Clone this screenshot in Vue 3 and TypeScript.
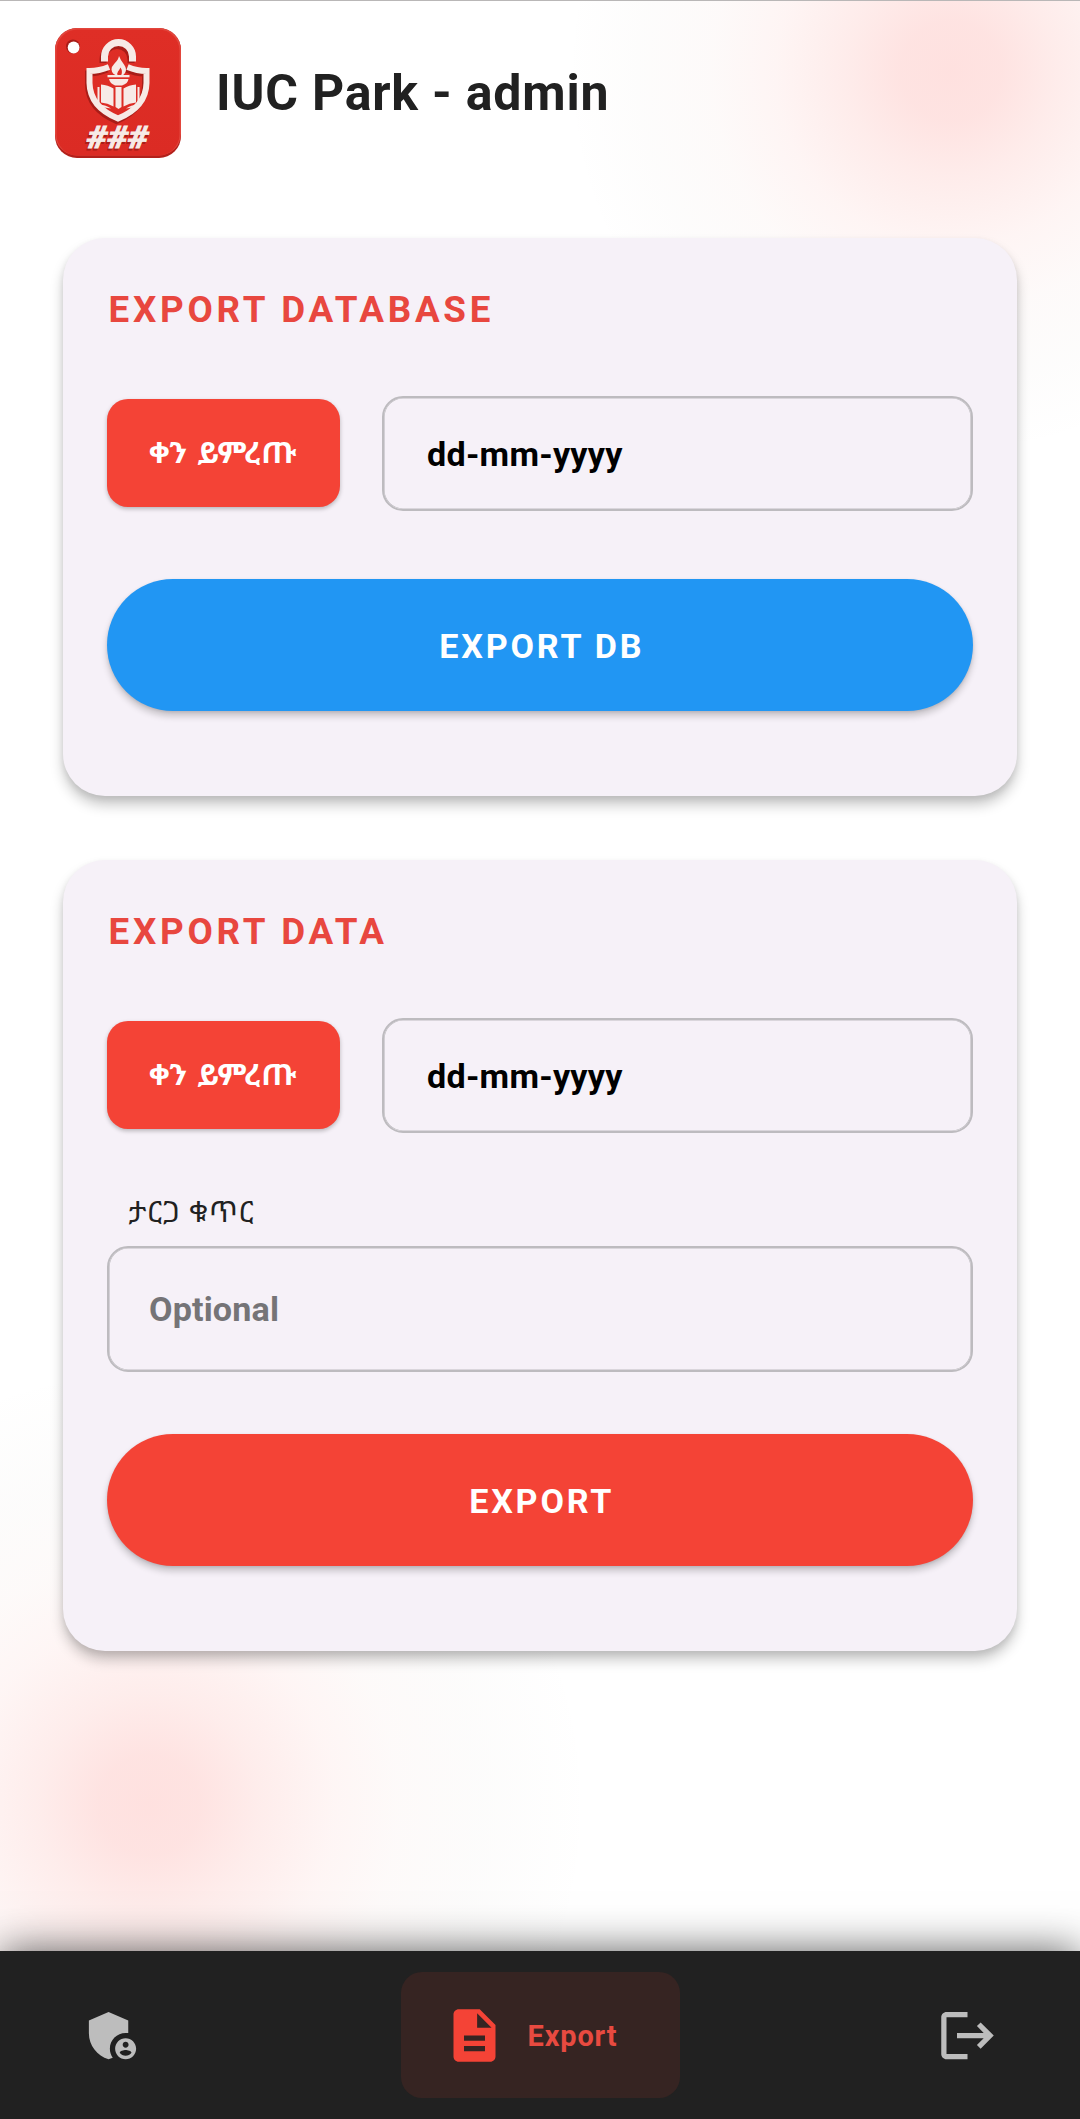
<script setup lang="ts">
import { ref } from 'vue'

interface NavItem {
  id: string
  label: string
  paths: string[]
}

const dateHint = 'dd-mm-yyyy'
const active = ref('export')

const navItems: NavItem[] = [
  {
    id: 'admin',
    label: '',
    paths: [
      'M17 11c.34 0 .67.04 1 .09V6.27L10.5 3 3 6.27v4.91c0 4.54 3.2 8.79 7.5 9.82.55-.13 1.08-.32 1.6-.55-.69-.98-1.1-2.17-1.1-3.45 0-3.31 2.69-6 6-6z',
      'M17 13c-2.21 0-4 1.79-4 4s1.79 4 4 4 4-1.79 4-4-1.79-4-4-4zm0 1.38c.62 0 1.12.51 1.12 1.12s-.51 1.12-1.12 1.12-1.12-.51-1.12-1.12.5-1.12 1.12-1.12zm0 5.37c-.93 0-1.74-.46-2.24-1.17.05-.72 1.51-1.08 2.24-1.08s2.19.36 2.24 1.08c-.5.71-1.31 1.17-2.24 1.17z',
    ],
  },
  {
    id: 'export',
    label: 'Export',
    paths: ['M14 2H6c-1.1 0-2 .9-2 2v16c0 1.1.89 2 2 2h12c1.1 0 2-.9 2-2V8l-6-6zm2 16H8v-2h8v2zm0-4H8v-2h8v2zm-3-5V3.5L18.5 9H13z'],
  },
  {
    id: 'logout',
    label: '',
    paths: ['M17 7l-1.41 1.41L18.17 11H8v2h10.17l-2.58 2.58L17 17l5-5zM4 5h8V3H4c-1.1 0-2 .9-2 2v14c0 1.1.9 2 2 2h8v-2H4V5z'],
  },
]
</script>

<template>
  <div class="screen">
    <header class="top">
      <svg class="logo" viewBox="0 0 128 132" width="128" height="132">
        <defs>
          <linearGradient id="tile" x1="0" y1="0" x2="0" y2="1">
            <stop offset="0" stop-color="#df2e26" />
            <stop offset="1" stop-color="#db2b24" />
          </linearGradient>
        </defs>
        <rect x="1" y="1" width="126" height="130" rx="22" fill="#b3201b" />
        <rect x="1" y="1" width="126" height="127.500" rx="22" fill="#e2463d" />
        <rect x="2.500" y="2.500" width="123" height="126" rx="21" fill="url(#tile)" />
        <circle cx="19" cy="19.500" r="7" fill="#a91c17" />
        <circle cx="19.600" cy="20.500" r="5.900" fill="#fff" />
        <g id="mark">
          <g transform="translate(-1.500 2)" fill="none" stroke="#a81d18">
            <path d="M50.500 34v-3.500a14 14 0 0 1 28 0V34" stroke-width="7" />
            <path d="M55 40.500Q45 44.500 35.500 44.500V56Q36 80 64 92Q92 80 92.500 56V44.500Q83 44.500 73.500 40.500" stroke-width="6" />
          </g>
          <g fill="none" stroke="#f7eae6">
            <path d="M50.500 34.500v-5a14 14 0 0 1 28 0v5" stroke-width="7" />
            <path d="M55 40Q45 44 35.500 44V56Q36 80 64 91.500Q92 80 92.500 56V44Q83 44 73.500 40" stroke-width="6" />
          </g>
          <g fill="#f7eae6">
            <path d="M65 29q1.500 4 5 8.500q3.500 5 1 8.500q-1.500 2.500-4 2.500q2-4-.5-8q-1.500 3-2.500 4q-1.500 2 0 4q-6-.5-6.500-6q0-3 3-6q4-4 4.500-7.500z" />
            <rect x="53.500" y="48" width="22" height="2.300" />
            <path d="M55 52h19.500q-.5 4.500-6.500 6.500h-7q-5-2-6-6.500z" />
            <path d="M61.500 60h6v20l-3 2-3-2z" />
            <path d="M47 57.500q7 .5 12.500 4v18q-6-3.500-12.500-4z" />
            <path d="M82 57.500q-7 .5-12.500 4v18q6-3.500 12.500-4z" />
            <path d="M43.500 60h2v17.500q6.500.5 11.500 4q-6.500-1.500-13.500-1.500z" />
            <path d="M85.500 60h-2v17.500q-6.500.5-11.500 4q6.500-1.500 13.500-1.500z" />
          </g>
        </g>
        <text class="hash" x="31" y="122.500" textLength="62" lengthAdjust="spacingAndGlyphs" fill="#a81d18" stroke="#a81d18">###</text>
        <text class="hash" x="32.500" y="120.500" textLength="62" lengthAdjust="spacingAndGlyphs" fill="#f7eae6" stroke="#f7eae6">###</text>
      </svg>
      <h1>IUC Park - admin</h1>
    </header>

    <main>
      <section class="card">
        <h2>EXPORT DATABASE</h2>
        <div class="row">
          <button class="pick"><span>ቀን ይምረጡ</span></button>
          <div class="field date">{{ dateHint }}</div>
        </div>
        <button class="cta blue">EXPORT DB</button>
      </section>

      <section class="card">
        <h2>EXPORT DATA</h2>
        <div class="row">
          <button class="pick"><span>ቀን ይምረጡ</span></button>
          <div class="field date">{{ dateHint }}</div>
        </div>
        <label>ታርጋ ቁጥር</label>
        <div class="field plate">Optional</div>
        <button class="cta red">EXPORT</button>
      </section>
    </main>

    <nav>
      <button v-for="item in navItems" :key="item.id" class="tab" :class="{ active: active === item.id }" @click="active = item.id">
        <svg viewBox="0 0 24 24" width="63" height="63" fill="currentColor">
          <path v-for="d in item.paths" :key="d" :d="d" fill-rule="evenodd" />
        </svg>
        <span v-if="item.label">{{ item.label }}</span>
      </button>
    </nav>
  </div>
</template>

<style>
body {
  margin: 0;
}
</style>

<style scoped>
* {
  box-sizing: border-box;
}
.screen {
  width: 1080px;
  height: 2119px;
  display: flex;
  flex-direction: column;
  overflow: hidden;
  border-top: 1px solid #b9b7b7;
  font-family: Roboto, 'Noto Sans Ethiopic', 'Noto Sans', sans-serif;
  background:
    radial-gradient(circle 385px at 951px 70px, rgba(250, 62, 52, 0.155) 0, rgba(250, 62, 52, 0.145) 50px, rgba(246, 67, 54, 0.1) 105px, rgba(240, 70, 56, 0.054) 175px, rgba(200, 95, 75, 0.03) 240px, rgba(150, 115, 95, 0.018) 310px, rgba(120, 110, 110, 0) 100%),
    radial-gradient(circle 440px at 149px 1804px, rgba(250, 62, 52, 0.155) 0, rgba(250, 62, 52, 0.145) 50px, rgba(246, 67, 54, 0.098) 110px, rgba(240, 70, 56, 0.05) 185px, rgba(200, 95, 75, 0.032) 250px, rgba(145, 120, 100, 0.022) 330px, rgba(120, 110, 110, 0) 100%),
    #fff;
}
button {
  border: 0;
  padding: 0;
  margin: 0;
  font: inherit;
}
.top {
  display: flex;
  align-items: center;
  gap: 34px;
  height: 131px;
  margin: 26px 54px 0;
}
.logo {
  flex: none;
}
.hash {
  font: italic 700 31px Roboto, sans-serif;
  stroke-width: 0.900px;
}
h1 {
  margin: 0;
  font-size: 50px;
  font-weight: 700;
  letter-spacing: 0.800px;
  color: #212121;
  white-space: nowrap;
}
main {
  flex: 1;
  display: flex;
  flex-direction: column;
  gap: 64px;
  padding: 80px 63px 0;
}
.card {
  display: flex;
  flex-direction: column;
  padding: 49.500px 44px 85.500px 43.500px;
  border-radius: 42px;
  background: #f6f1f8;
  box-shadow: 0 9px 13px rgba(0, 0, 0, 0.22), 0 3px 6px rgba(0, 0, 0, 0.08);
}
h2 {
  height: 43px;
  margin: 0 0 65px 2px;
  font-size: 36.750px;
  line-height: 43px;
  font-weight: 700;
  letter-spacing: 3.750px;
  color: #e8473f;
  white-space: nowrap;
}
.row {
  display: flex;
  align-items: center;
  gap: 42px;
}
.pick {
  width: 233.500px;
  height: 108px;
  padding-bottom: 4px;
  border-radius: 21px;
  background: #f44336;
  color: #fff;
  font-size: 29.500px;
  font-weight: 700;
  letter-spacing: 1.300px;
  white-space: nowrap;
  box-shadow: 0 2px 4px rgba(0, 0, 0, 0.25);
}
.field {
  display: flex;
  align-items: center;
  border: 2px solid #bdbbbf;
  box-shadow: inset 0 0 0 0.600px #bdbbbf;
  border-radius: 21px;
  font-size: 34.125px;
  font-weight: 700;
  letter-spacing: 0.250px;
}
.date {
  flex: 1;
  height: 115px;
  padding: 2px 0 0 43px;
  color: #000;
}
.cta {
  height: 131.500px;
  margin-top: 68.500px;
  padding: 2px 0 0 4px;
  border-radius: 66px;
  color: #fff;
  font-size: 34.125px;
  font-weight: 700;
  letter-spacing: 2.800px;
  box-shadow: 0 5px 7px rgba(0, 0, 0, 0.2), 0 1px 3px rgba(0, 0, 0, 0.1);
}
.blue {
  background: #2196f3;
}
.red {
  margin-top: 62.500px;
  background: #f44336;
}
label {
  height: 48px;
  margin: 55px 0 10px 22px;
  font-size: 29px;
  line-height: 48px;
  letter-spacing: 1px;
  color: #212121;
}
.plate {
  height: 126px;
  padding-left: 40.500px;
  letter-spacing: 0.150px;
  color: #757477;
}
nav {
  flex: none;
  display: flex;
  justify-content: space-between;
  align-items: center;
  height: 168px;
  padding: 0 39px;
  background: #212121;
  box-shadow: 0 0 40px rgba(0, 0, 0, 0.64);
}
.tab {
  display: flex;
  align-items: center;
  gap: 21px;
  height: 126px;
  padding: 0 42px;
  border-radius: 21px;
  background: none;
  color: #bdbdbd;
}
.tab.active {
  width: 279px;
  background: #362422;
  color: #f44336;
  font-size: 28.900px;
  font-weight: 700;
  letter-spacing: 0.900px;
}
.tab.active span {
  padding: 2px 0 0 1px;
  color: #e84a40;
}
</style>
